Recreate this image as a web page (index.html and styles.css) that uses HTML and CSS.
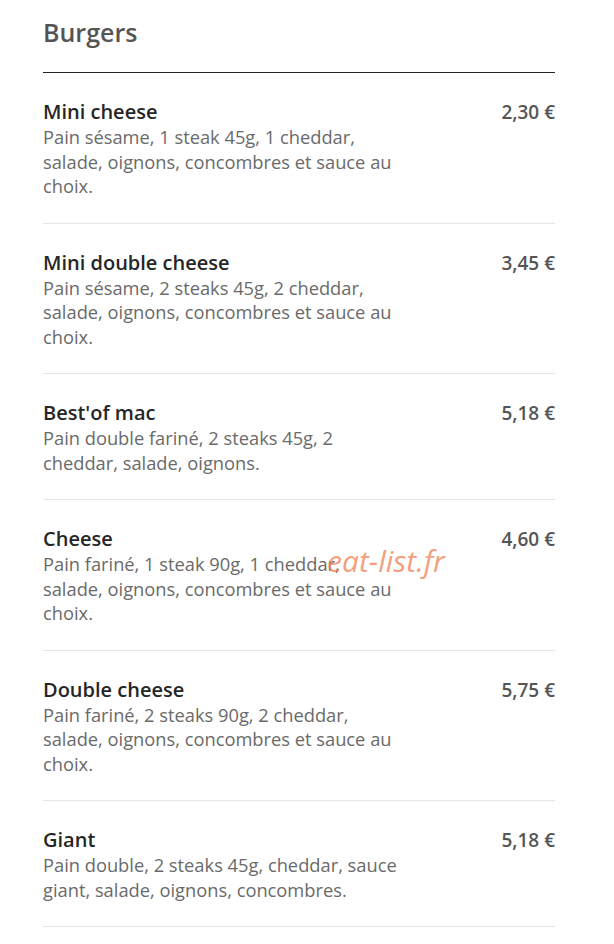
FILE: index.html
```html
<!DOCTYPE html>
<html lang="fr">
<head>
  <meta charset="UTF-8">
  <meta name="viewport" content="width=device-width, initial-scale=1.0">
  <title>Burgers</title>
  <link rel="stylesheet" href="styles.css">
</head>
<body>
  <main class="menu">
    <h2 class="menu-title">Burgers</h2>

    <div class="item">
      <div class="item-info">
        <h3>Mini cheese</h3>
        <p>Pain sésame, 1 steak 45g, 1 cheddar, salade, oignons, concombres et sauce au choix.</p>
      </div>
      <span class="price">2,30 €</span>
    </div>

    <div class="item">
      <div class="item-info">
        <h3>Mini double cheese</h3>
        <p>Pain sésame, 2 steaks 45g, 2 cheddar, salade, oignons, concombres et sauce au choix.</p>
      </div>
      <span class="price">3,45 €</span>
    </div>

    <div class="item">
      <div class="item-info">
        <h3>Best'of mac</h3>
        <p>Pain double fariné, 2 steaks 45g, 2 cheddar, salade, oignons.</p>
      </div>
      <span class="price">5,18 €</span>
    </div>

    <div class="item">
      <div class="item-info">
        <h3>Cheese</h3>
        <p>Pain fariné, 1 steak 90g, 1 cheddar, salade, oignons, concombres et sauce au choix.</p>
      </div>
      <span class="price">4,60 €</span>
      <span class="watermark">eat-list.fr</span>
    </div>

    <div class="item">
      <div class="item-info">
        <h3>Double cheese</h3>
        <p>Pain fariné, 2 steaks 90g, 2 cheddar, salade, oignons, concombres et sauce au choix.</p>
      </div>
      <span class="price">5,75 €</span>
    </div>

    <div class="item">
      <div class="item-info">
        <h3>Giant</h3>
        <p>Pain double, 2 steaks 45g, cheddar, sauce giant, salade, oignons, concombres.</p>
      </div>
      <span class="price">5,18 €</span>
    </div>
  </main>
</body>
</html>
```

FILE: styles.css
```css
body {
  margin: 0;
  background: #fff;
  font-family: "Open Sans", Arial, sans-serif;
  color: #555;
}
.menu {
  width: 512px;
  margin-left: 43px;
}
.menu-title {
  margin: 0;
  padding-top: 15px;
  height: 57px;
  font-size: 25px;
  font-weight: 600;
  line-height: 34px;
  color: #555;
  border-bottom: 1px solid #222;
}
.item {
  position: relative;
  display: flex;
  justify-content: space-between;
  align-items: flex-start;
  padding: 26px 0 24px;
  border-bottom: 1px solid #e6e6e6;
}
.item-info {
  width: 356px;
}
.item h3 {
  margin: 0;
  font-size: 20px;
  font-weight: 600;
  line-height: 26px;
  color: #262626;
}
.item p {
  margin: 0;
  font-size: 18.3px;
  line-height: 24.5px;
  color: #6a6a6a;
}
.price {
  font-size: 19px;
  font-weight: 600;
  line-height: 26px;
  color: #555;
}
.watermark {
  position: absolute;
  left: 284px;
  top: 40px;
  font-size: 30px;
  font-style: italic;
  color: rgba(240, 128, 80, 0.75);
}
```
